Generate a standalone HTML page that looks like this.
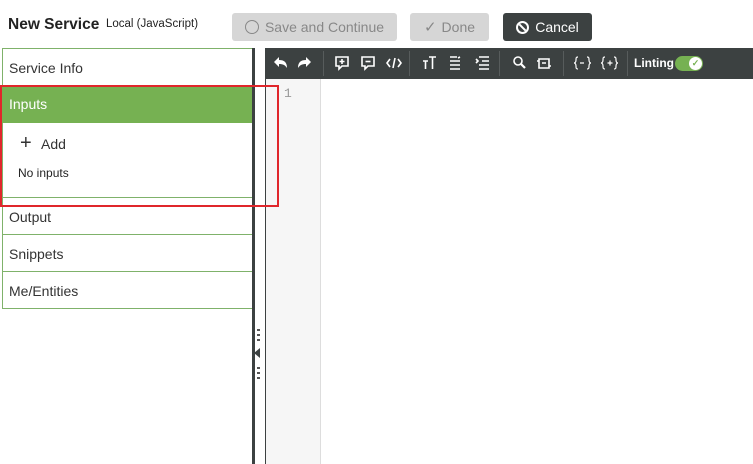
<!DOCTYPE html>
<html><head><style>
*{box-sizing:border-box;margin:0;padding:0}
body{width:753px;height:464px;overflow:hidden;background:#fff;font-family:"Liberation Sans",sans-serif;position:relative;color:#333}
.a{position:absolute}
.btn{position:absolute;top:13px;height:28px;border-radius:3px;font-size:14px;line-height:28px;text-align:center}
.item{position:absolute;left:2px;width:251px;height:37px;border:1px solid #7fb26a;border-top:none;font-size:14px;line-height:38px;padding-left:6px;color:#333}
.tb{position:absolute;top:48px;left:266px;width:487px;height:31px;background:#3c4141}
.sep{position:absolute;top:3px;width:1px;height:25px;background:#575c5c}
svg{position:absolute}
</style></head><body>
<div class="a" style="left:8px;top:16px;font-size:15.5px;font-weight:bold;color:#222">New Service</div>
<div class="a" style="left:106px;top:18px;font-size:11.5px;color:#222">Local (JavaScript)</div>
<div class="btn" style="left:232px;width:165px;background:#d6d6d6;color:#888"><span style="display:inline-block;width:14px;height:14px;border:1.5px solid #888;border-radius:50%;vertical-align:-2px;margin-right:6px"></span>Save and Continue</div>
<div class="btn" style="left:410px;width:79px;background:#d6d6d6;color:#888"><span style="font-size:15px;margin-right:5px">✓</span>Done</div>
<div class="btn" style="left:503px;width:89px;background:#3c4141;color:#fff"><span style="display:inline-block;width:13px;height:13px;border:2px solid #fff;border-radius:50%;vertical-align:-2px;margin-right:6px;position:relative;overflow:hidden"><span style="position:absolute;left:3.5px;top:-2px;width:2px;height:14px;background:#fff;transform:rotate(-45deg)"></span></span>Cancel</div>

<div class="item" style="top:48px;border-top:1px solid #7fb26a;height:38px">Service Info</div>
<div class="a" style="left:2px;top:86px;width:251px;height:37px;background:#76b152;color:#fff;font-size:14px;line-height:36px;padding-left:7px">Inputs</div>
<div class="a" style="left:2px;top:123px;width:251px;height:75px;border-left:1px solid #7fb26a;border-bottom:1px solid #7fb26a"></div>
<div class="a" style="left:20px;top:133px;font-size:20px;line-height:20px;color:#333">+</div>
<div class="a" style="left:41px;top:136px;font-size:14px;color:#333">Add</div>
<div class="a" style="left:18px;top:166px;font-size:12px;color:#222">No inputs</div>
<div class="item" style="top:198px">Output</div>
<div class="item" style="top:235px">Snippets</div>
<div class="item" style="top:272px">Me/Entities</div>

<div class="a" style="left:252px;top:48px;width:3px;height:416px;background:#3c4141"></div>
<div class="a" style="left:265px;top:48px;width:1px;height:416px;background:#3c4141"></div>
<div class="a" style="left:257px;top:329px;width:3px;height:12px;background:repeating-linear-gradient(#555 0 2px,transparent 2px 5px)"></div>
<div class="a" style="left:254px;top:348px;width:0;height:0;border-top:5px solid transparent;border-bottom:5px solid transparent;border-right:6px solid #3c4141"></div>
<div class="a" style="left:257px;top:367px;width:3px;height:12px;background:repeating-linear-gradient(#555 0 2px,transparent 2px 5px)"></div>

<div class="a" style="left:266px;top:79px;width:55px;height:385px;background:#f6f6f6;border-right:1px solid #ddd"></div>
<div class="a" style="left:284px;top:86px;font-family:'Liberation Mono',monospace;font-size:13px;color:#999">1</div>

<div class="tb">
<svg width="487" height="31" fill="none" stroke="#fff" stroke-width="1.6">
<path d="M8 14l5-5v3c5 0 8 2 8 8c-2-3-4-4-8-4v3z" fill="#fff" stroke="none"/>
<path d="M45 14l-5-5v3c-5 0-8 2-8 8c2-3 4-4 8-4v3z" fill="#fff" stroke="none"/>
<path d="M70 9h12v9h-6l-3 3v-3h-3z"/><path d="M76 11v5M73.5 13.5h5"/>
<path d="M96 9h12v9h-6l-3 3v-3h-3z"/><path d="M99.5 13.5h5"/>
<path d="M124 11l-3 4 3 4M127 20l2-10M132 11l3 4-3 4"/>
<path d="M157 13h5M159.5 13v8M163 9h7M166.5 9v12"/>
<path d="M184 9h7M184 13h10M184 17h10M184 21h10M192 10l2-1"/>
<path d="M213 9h10M216 13h7M213 17h10M213 21h10M210 11l2 2-2 2"/>
<circle cx="252" cy="13" r="4"/><path d="M255 16l4 4" stroke-width="2.2"/>
<path d="M273 11h10v9h-10zM271 13h2M283 18h2M276 15h4" />
<path d="M312 9c-2 0-2 1-2 3s-1 3-2 3c1 0 2 1 2 3s0 3 2 3M321 9c2 0 2 1 2 3s1 3 2 3c-1 0-2 1-2 3s0 3-2 3M314 15h4" stroke-width="1.2"/>
<path d="M339 9c-2 0-2 1-2 3s-1 3-2 3c1 0 2 1 2 3s0 3 2 3M348 9c2 0 2 1 2 3s1 3 2 3c-1 0-2 1-2 3s0 3-2 3M341.5 15h5M344 12.5v5" stroke-width="1.2"/>
</svg>
<div class="sep" style="left:57px"></div>
<div class="sep" style="left:143px"></div>
<div class="sep" style="left:233px"></div>
<div class="sep" style="left:297px"></div>
<div class="sep" style="left:361px"></div>
<div class="a" style="left:368px;top:8px;color:#fff;font-size:12px;font-weight:bold">Linting</div>
<div class="a" style="left:409px;top:8px;width:28px;height:15px;border-radius:8px;background:#76b152"></div>
<div class="a" style="left:423px;top:9px;width:13px;height:13px;border-radius:50%;background:#fff;color:#76b152;font-size:9px;line-height:13px;text-align:center;font-weight:bold">✓</div>
</div>

<div class="a" style="left:0;top:85px;width:279px;height:122px;border:2px solid #e0262b"></div>
</body></html>
